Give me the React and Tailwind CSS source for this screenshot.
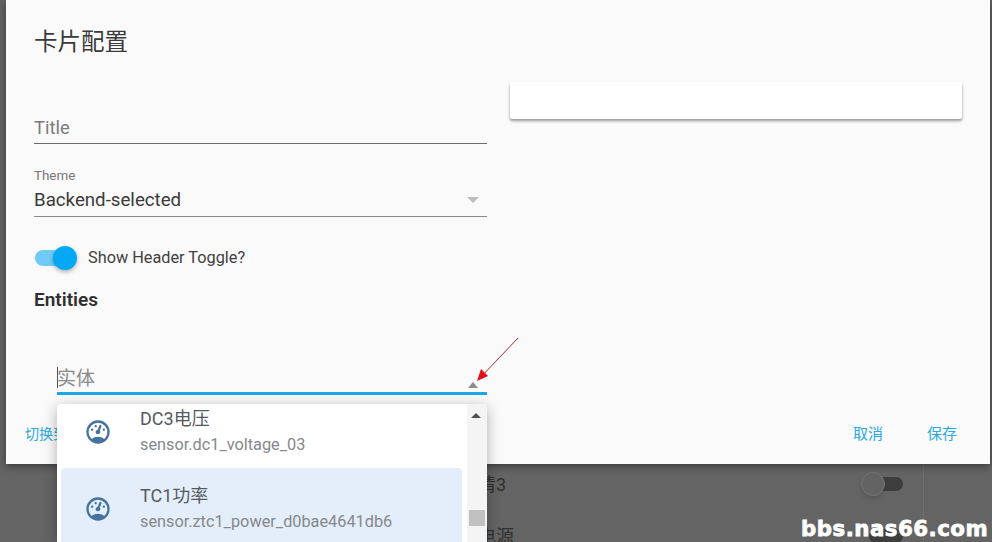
const FONT = { fontFamily: 'Roboto, "Noto Sans CJK SC", sans-serif' };
const GAUGE = "M12,2A10,10 0 0,0 2,12A10,10 0 0,0 12,22A10,10 0 0,0 22,12A10,10 0 0,0 12,2M12,4A8,8 0 0,1 20,12C20,14.4 19,16.5 17.3,18C15.9,16.7 14,16 12,16C10,16 8.2,16.7 6.7,18C5,16.5 4,14.4 4,12A8,8 0 0,1 12,4M14,5.89C13.62,5.9 13.26,6.15 13.1,6.54L11.81,9.77L11.71,10C11,10.13 10.41,10.6 10.14,11.26C9.73,12.29 10.23,13.45 11.26,13.86C12.29,14.27 13.45,13.77 13.86,12.74C14.12,12.08 14,11.32 13.57,10.76L13.67,10.5L14.96,7.29L14.97,7.26C15.17,6.75 14.92,6.17 14.41,5.96C14.28,5.91 14.15,5.89 14,5.89M10,6A1,1 0 0,0 9,7A1,1 0 0,0 10,8A1,1 0 0,0 11,7A1,1 0 0,0 10,6M7,9A1,1 0 0,0 6,10A1,1 0 0,0 7,11A1,1 0 0,0 8,10A1,1 0 0,0 7,9M17,9A1,1 0 0,0 16,10A1,1 0 0,0 17,11A1,1 0 0,0 18,10A1,1 0 0,0 17,9Z";

function Gauge() {
  return (
    <svg viewBox="0 0 24 24" className="w-[28px] h-[28px] shrink-0" fill="#44739e">
      <path d={GAUGE} />
    </svg>
  );
}

function Option({ name, id, active, className }) {
  return (
    <div className={`flex items-center rounded-[4px] ${active ? "bg-[#e3eefa]" : ""} ${className}`}>
      <Gauge />
      <div className="ml-[28px] flex flex-col">
        <span className="text-[18px] leading-[26px] text-[#555a60]">{name}</span>
        <span className="text-[16.3px] leading-[26px] text-[#85888c]">{id}</span>
      </div>
    </div>
  );
}

export default function App() {
  return (
    <div style={FONT} className="relative w-[992px] h-[542px] overflow-hidden bg-[#646464]">
      {/* page behind the dialog */}
      <div className="pt-[464px] pl-[478px]">
        <div className="w-[446px] h-[78px] border-r border-[#6e6e6e] text-[18px] text-[#2f2f2f]">
          <div className="flex items-center justify-between h-[40px] pr-[20px]">
            <span>清3</span>
            <div className="relative w-[34px] h-[14px] rounded-full bg-[#3e3e3e]">
              <div className="absolute left-[-8px] top-[-5px] w-[24px] h-[24px] rounded-full bg-[#636363] border border-[#777] shadow-md" />
            </div>
          </div>
          <div className="flex items-start justify-between h-[38px] pt-[19px] pr-[20px]">
            <span>电源</span>
            <div className="w-[34px] h-[14px] mt-[6px] rounded-full bg-[#3e3e3e]" />
          </div>
        </div>
      </div>

      {/* dialog */}
      <div className="absolute left-[6px] top-0 w-[984px] h-[464px] flex flex-col bg-[#fafafa] shadow-[0_2px_8px_rgba(0,0,0,0.45)]">
        <h2 className="pl-[28px] pt-[26px] h-[82px] text-[23.5px] leading-[33px] text-[#3a3a3a]">卡片配置</h2>

        <div className="flex gap-[23px] px-[28px]">
          <div className="w-[453px]">
            <div className="h-[62px] border-b border-[#6b6b6b] pt-[33px]">
              <span className="block text-[18.4px] leading-[26px] text-[#7b7b7b]">Title</span>
            </div>
            <div className="relative mt-[22px] h-[51px] border-b border-[#8a8a8a]">
              <div className="text-[13.4px] leading-[20px] text-[#777]">Theme</div>
              <div className="text-[18.7px] leading-[26px] text-[#3a3a3a] mt-[1px]">Backend-selected</div>
              <div className="absolute right-[8px] top-[31px] w-0 h-0 border-x-[6px] border-x-transparent border-t-[6px] border-t-[#bdbdbd]" />
            </div>
            <div className="flex items-center mt-[28px] h-[26px]">
              <div className="relative w-[34px] h-[16px] ml-[1px] rounded-full bg-[#6fcbf6]">
                <div className="absolute right-[-8px] top-[-4px] w-[24px] h-[24px] rounded-full bg-[#03a9f4] shadow-[0_2px_4px_rgba(0,0,0,0.3)]" />
              </div>
              <span className="ml-[19px] text-[16.3px] text-[#3f3f3f]">Show Header Toggle?</span>
            </div>
            <div className="mt-[16px] text-[19px] leading-[26px] font-semibold text-[#2f2f2f]">Entities</div>

            {/* entity combobox */}
            <div className="relative ml-[23px] mt-[50px] h-[32px] border-b-[3px] border-[#1ba8e4]">
              <div className="absolute left-0 top-[4px] w-[1px] h-[21px] bg-[#555]" />
              <span className="block pt-[2px] text-[19px] leading-[28px] text-[#8a8a8a]">实体</span>
              <div className="absolute right-[9px] top-[19px] w-0 h-0 border-x-[5px] border-x-transparent border-b-[6px] border-b-[#8d8d8d]" />
            </div>
          </div>
          <div className="w-[452px] h-[37px] bg-white rounded-[2px] shadow-[0_2px_3px_rgba(0,0,0,0.4)]" />
        </div>

        <div className="mt-auto flex items-center h-[60px] pl-[19px] pr-[33px] text-[15px] text-[#29a9e1]">
          <span className="text-[14px] mr-auto">切换到</span>
          <span>取消</span>
          <span className="ml-[44px]">保存</span>
        </div>
      </div>

      {/* drop-down list */}
      <div className="absolute left-[57px] top-[404px] w-[430px] h-[138px] flex bg-white rounded-t-[4px] overflow-hidden shadow-[0_3px_14px_rgba(0,0,0,0.3)]">
        <div className="flex-1 min-w-0 overflow-hidden">
          <Option name="DC3电压" id="sensor.dc1_voltage_03" className="h-[64px] pl-[27px] mt-[-4px]" />
          <Option name="TC1功率" id="sensor.ztc1_power_d0bae4641db6" active className="h-[78px] ml-[4px] mr-[5px] mt-[4px] pt-[3px] pl-[23px]" />
        </div>
        <div className="relative w-[20px] bg-[#f4f4f4]">
          <div className="absolute left-[4px] top-[9px] w-0 h-0 border-x-[5px] border-x-transparent border-b-[5px] border-b-[#505050]" />
          <div className="absolute left-[2px] top-[106px] w-[16px] h-[16px] bg-[#c1c1c1]" />
        </div>
      </div>

      {/* red annotation arrow */}
      <svg className="absolute left-[470px] top-[332px]" width="54" height="56" viewBox="0 0 54 56">
        <line x1="48" y1="6" x2="10" y2="46" stroke="#b3262c" strokeWidth="1" />
        <polygon points="7,49 11,37 18,44" fill="#e01018" />
      </svg>

      {/* watermark */}
      <span
        className="absolute left-[801px] top-[516px] text-[21.3px] leading-[26px] font-bold text-white tracking-[0.5px]"
        style={{ fontFamily: '"DejaVu Sans", sans-serif', WebkitTextStroke: "0.8px white" }}
      >
        bbs.nas66.com
      </span>
    </div>
  );
}
